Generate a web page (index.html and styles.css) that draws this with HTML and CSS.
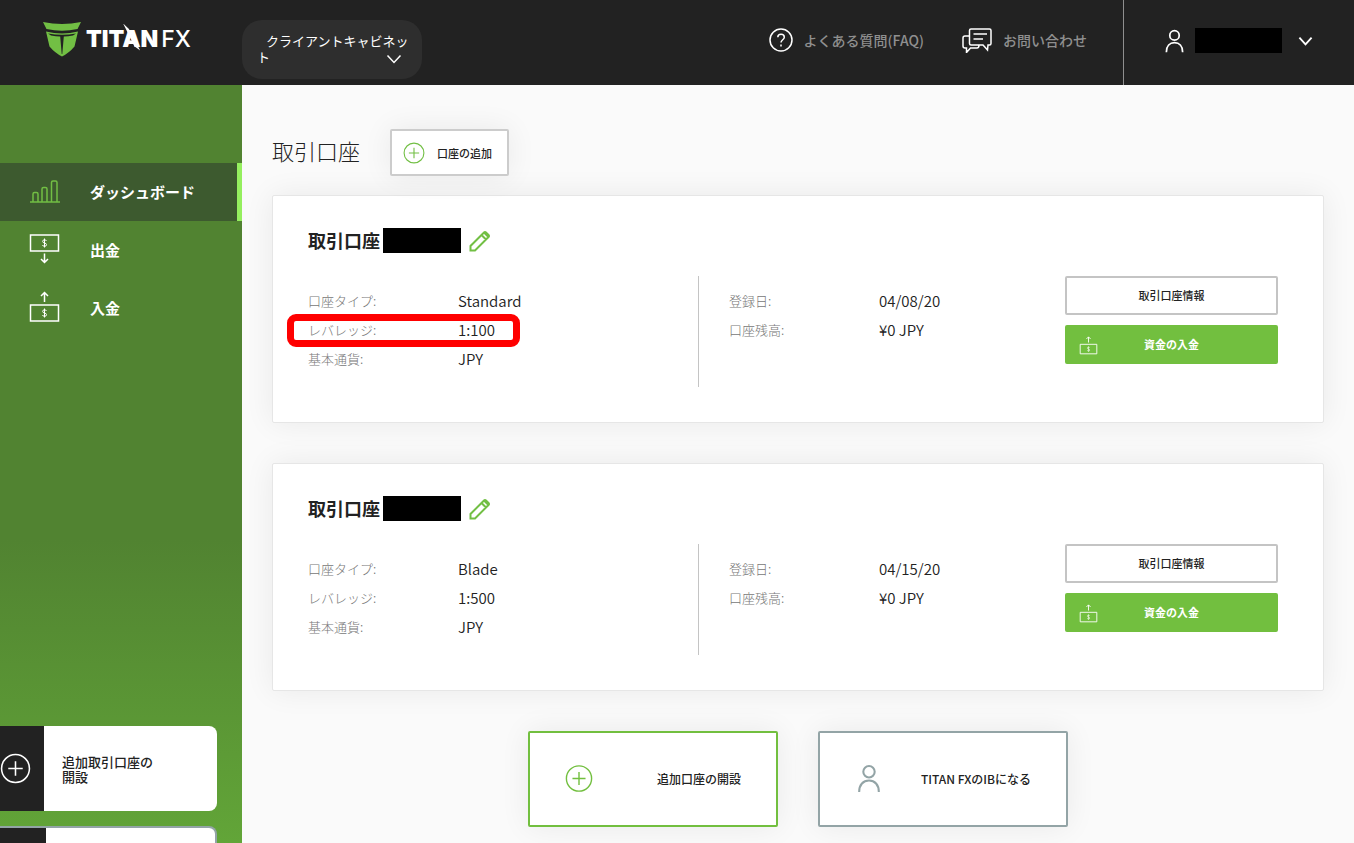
FILE: index.html
```html
<!DOCTYPE html>
<html lang="ja">
<head>
<meta charset="utf-8">
<meta name="viewport" content="width=device-width, initial-scale=1">
<title>Titan FX</title>
<link rel="stylesheet" href="styles.css">
</head>
<body>
<svg class="sprite" aria-hidden="true">
  <symbol id="plus" viewBox="0 0 30 30"><circle cx="15" cy="15" r="13.5"/><path d="M15 8v14M8 15h14"/></symbol>
  <symbol id="user" viewBox="0 0 24 28"><circle cx="12" cy="7.5" r="5.500"/><path d="M2.500 27c0-7 4-11 9.500-11s9.500 4 9.500 11"/></symbol>
  <symbol id="chevron" viewBox="0 0 16 10"><path d="M1.500 1.500 8 8.500l6.500-7"/></symbol>
  <symbol id="pencil" viewBox="0 0 22 22"><path d="M1.500 20.500v-4.500L15 2.500q1-1 2 0l2.500 2.500q1 1 0 2L6 20.500zM12.500 5l4.500 4.500M15 2.500l4.500 4.500"/></symbol>
  <symbol id="deposit" viewBox="0 0 30 32"><path d="M1 14h28v16H1zM15 11V1.500M11.500 5 15 1.500 18.500 5"/><path class="thin" d="M17 20q-.5-1.200-2-1.200-1.800 0-1.800 1.600 0 1.300 1.800 1.600 2 .3 2 1.700 0 1.600-2 1.600-1.600 0-2-1.300M15 17.500v9"/></symbol>
  <symbol id="withdraw" viewBox="0 0 30 32"><path d="M1 2h28v16H1zM15 20.500V29M11.500 26l3.500 3.500 3.500-3.500"/><path class="thin" d="M17 8q-.5-1.200-2-1.200-1.800 0-1.800 1.600 0 1.300 1.800 1.600 2 .3 2 1.700 0 1.600-2 1.600-1.600 0-2-1.300M15 5.500v9"/></symbol>
</svg>

<header class="topbar">
  <a class="logo" href="#" aria-label="TITANFX">
    <svg class="logo-mark" viewBox="0 0 38 36"><path d="M0 1Q19 5 38 1L34.500 8Q19 11.500 3.500 8zM3 10.500Q19 14.500 35 10.500L31.500 25.500Q26 32 19 35.500 12 32 6.500 25.500z"/><path class="logo-slit" d="M5 12.500Q19 15 33 12.500L30 14.500Q25 15.500 20.800 15.500L19.300 33h-.6L17.200 15.500Q13 15.500 8 14.500z"/></svg>
    <span class="logo-text"><b>TIT<span class="logo-a">A</span>N</b>FX</span>
  </a>
  <button class="cabinet" type="button" aria-haspopup="listbox">クライアントキャビネット<svg class="cabinet-arrow"><use href="#chevron"/></svg></button>
  <nav class="help">
    <a href="#"><svg class="help-faq" viewBox="0 0 24 24"><circle cx="12" cy="12" r="11"/><path d="M8.800 9.200c0-4 6.500-4 6.500 0 0 2.500-3.300 2.600-3.300 5.300M12 16.500v2"/></svg>よくある質問(FAQ)</a>
    <a href="#"><svg class="help-chat" viewBox="0 0 30 26"><path d="M9 2h18.500q1.500 0 1.500 1.500v13q0 1.500-1.500 1.500H26l-.5 5-4.500-5H9q-1.500 0-1.500-1.500v-13Q7.500 2 9 2zM11.500 7H25M11.500 12H21M7.500 9H3q-2 0-2 2v8q0 2 2 2h1.500v4.500L8.500 21H15q2 0 2-3"/></svg>お問い合わせ</a>
  </nav>
  <button class="account" type="button" aria-label="アカウント">
    <svg class="account-user"><use href="#user"/></svg>
    <span class="account-name"></span>
    <svg class="account-arrow"><use href="#chevron"/></svg>
  </button>
</header>

<div class="layout">
  <aside class="sidebar">
    <nav class="menu">
      <a class="menu-item active" href="#"><svg viewBox="0 0 31 32"><path d="M1 27h30M4 27V19q0-1.500 1.500-1.500h2Q9 17.500 9 19v8M13 27V14q0-1.500 1.500-1.500h2q1.500 0 1.500 1.500v13M22.500 27V7.500Q22.500 6 24 6h2.500Q28 6 28 7.500V27"/></svg>ダッシュボード</a>
      <a class="menu-item" href="#"><svg><use href="#withdraw"/></svg>出金</a>
      <a class="menu-item" href="#"><svg><use href="#deposit"/></svg>入金</a>
    </nav>
    <div class="promos">
      <a class="promo" href="#"><span class="promo-icon"><svg><use href="#plus"/></svg></span><span class="promo-text">追加取引口座の開設</span></a>
      <a class="promo outlined" href="#" aria-label="IB"><span class="promo-icon"></span></a>
    </div>
  </aside>

  <main class="content">
    <div class="heading">
      <h1>取引口座</h1>
      <button class="add" type="button"><svg><use href="#plus"/></svg>口座の追加</button>
    </div>

    <section class="card">
      <h2>取引口座<span class="account-number"></span><button class="edit" type="button" aria-label="編集"><svg><use href="#pencil"/></svg></button></h2>
      <div class="card-body">
        <dl class="facts">
          <div><dt>口座タイプ:</dt><dd>Standard</dd></div>
          <div class="marked"><dt>レバレッジ:</dt><dd>1:100</dd></div>
          <div><dt>基本通貨:</dt><dd>JPY</dd></div>
        </dl>
        <dl class="facts divided">
          <div><dt>登録日:</dt><dd>04/08/20</dd></div>
          <div><dt>口座残高:</dt><dd>¥0 JPY</dd></div>
        </dl>
        <div class="actions">
          <button class="btn" type="button">取引口座情報</button>
          <button class="btn primary" type="button"><svg><use href="#deposit"/></svg>資金の入金</button>
        </div>
      </div>
    </section>

    <section class="card">
      <h2>取引口座<span class="account-number"></span><button class="edit" type="button" aria-label="編集"><svg><use href="#pencil"/></svg></button></h2>
      <div class="card-body">
        <dl class="facts">
          <div><dt>口座タイプ:</dt><dd>Blade</dd></div>
          <div><dt>レバレッジ:</dt><dd>1:500</dd></div>
          <div><dt>基本通貨:</dt><dd>JPY</dd></div>
        </dl>
        <dl class="facts divided">
          <div><dt>登録日:</dt><dd>04/15/20</dd></div>
          <div><dt>口座残高:</dt><dd>¥0 JPY</dd></div>
        </dl>
        <div class="actions">
          <button class="btn" type="button">取引口座情報</button>
          <button class="btn primary" type="button"><svg><use href="#deposit"/></svg>資金の入金</button>
        </div>
      </div>
    </section>

    <div class="cta-row">
      <a class="cta green" href="#"><svg><use href="#plus"/></svg><span>追加口座の開設</span></a>
      <a class="cta" href="#"><svg><use href="#user"/></svg><span>TITAN FXのIBになる</span></a>
    </div>
  </main>
</div>
</body>
</html>
```
FILE: styles.css
```css
*, *::before, *::after { box-sizing: border-box; }
body {
  margin: 0;
  height: 100vh;
  overflow: hidden;
  display: flex;
  flex-direction: column;
  background: #fafafa;
  color: #222;
  font-family: "Noto Sans CJK JP", sans-serif;
  font-size: 13px;
}
a { color: inherit; text-decoration: none; }
button { font: inherit; color: inherit; background: none; border: 0; padding: 0; cursor: pointer; }
h1, h2, dl, dd { margin: 0; }
svg { fill: none; stroke: currentColor; stroke-width: 1.5; flex: none; display: block; }
.thin { stroke-width: 1; }
.sprite { position: absolute; width: 0; height: 0; }

.topbar { flex: none; height: 85px; display: flex; align-items: center; background: #222; color: #fff; }
.logo { width: 242px; padding: 0 0 8px 43px; display: flex; align-items: center; gap: 5px; }
.logo-mark { width: 38px; height: 36px; fill: #72bf44; stroke: none; }
.logo-mark .logo-slit { fill: #222; }
.logo-text { display: flex; gap: 3px; font-family: Inter, sans-serif; font-size: 23px; line-height: 24px; font-weight: 500; }
.logo-text b { font-weight: 900; }
.logo-a { position: relative; }
.logo-a::after { content: ""; position: absolute; left: 1px; top: -1px; width: 17px; height: 27px; background: #fff; clip-path: polygon(0 0, 34% 20%, 100% 100%, 66% 84%); }
.cabinet {
  position: relative;
  width: 180px;
  height: 59px;
  align-self: flex-start;
  margin-top: 20px;
  padding: 0 12px 2px 15px;
  border-radius: 20px;
  background: #2e2e2e;
  text-align: left;
  text-indent: 9px;
  line-height: 16px;
  word-break: break-all;
}
.cabinet-arrow { position: absolute; right: 20px; bottom: 15px; width: 16px; height: 10px; }
.help { margin-left: auto; display: flex; gap: 38px; padding: 0 36px 6px 0; color: #8f8f8f; font-size: 14px; font-weight: 500; }
.help a { display: flex; align-items: center; gap: 11px; }
.help svg { color: #fff; }
.help-faq { width: 24px; height: 24px; }
.help-chat { width: 30px; height: 26px; }
.account { align-self: stretch; display: flex; align-items: center; padding: 0 41px 4px 40px; border-left: 1px solid #8f8f8f; }
.account-user { width: 21px; height: 24px; stroke-width: 2; }
.account-name { width: 87px; height: 25px; margin: 0 16px 0 10px; background: #000; }
.account-arrow { width: 15px; height: 10px; stroke-width: 2; }

.layout { flex: 1; min-height: 0; display: flex; }
.sidebar {
  flex: none;
  width: 242px;
  display: flex;
  flex-direction: column;
  overflow: hidden;
  background: linear-gradient(#518331 0%, #518331 60%, #62a538 100%);
  color: #fff;
}
.menu { padding-top: 78px; }
.menu-item { height: 58px; display: flex; align-items: center; gap: 30px; padding: 0 0 2px 29px; font-size: 15px; font-weight: 700; }
.menu-item svg { width: 31px; height: 32px; }
.menu-item.active { background: #3d5a2f; border-right: 5px solid #95ef5f; }
.menu-item.active svg { color: #72bf44; }
.promos { margin-top: auto; height: 117px; flex: none; display: flex; flex-direction: column; gap: 15px; }
.promo { flex: none; width: 217px; height: 85px; display: flex; align-items: center; background: #fff; border-radius: 0 8px 8px 0; color: #222; overflow: hidden; }
.promo-icon { flex: none; width: 44px; height: 100%; display: flex; align-items: center; background: #222; color: #fff; }
.promo-icon svg { width: 31px; height: 31px; }
.promo-text { width: 128px; padding-left: 18px; padding-right: 16px; font-weight: 500; line-height: 15px; }
.promo.outlined { border: 2px solid #93a4a6; border-left: 0; }
.promo.outlined .promo-icon { width: 46px; }

.content { flex: 1; min-width: 0; padding: 44px 30px 16px; }
.heading { display: flex; align-items: center; gap: 30px; margin-bottom: 19px; }
h1 { padding-bottom: 5px; font-size: 22px; font-weight: 300; line-height: 42px; }
.add { display: flex; align-items: center; gap: 12px; height: 47px; padding: 0 15px 0 11px; border: 2px solid #ccc; border-radius: 2px; background: #fff; font-size: 11px; font-weight: 500; box-shadow: 0 0 30px rgba(0, 0, 0, .07); }
.add svg { width: 22px; height: 22px; color: #72bf44; }
.card { margin-bottom: 40px; padding: 32px 45px 35px 35px; border: 1px solid #e6e6e6; border-radius: 2px; background: #fff; box-shadow: 0 0 30px rgba(0, 0, 0, .07); }
h2 { display: flex; align-items: center; font-size: 18px; line-height: 25px; font-weight: 700; margin-bottom: 23px; }
.account-number { width: 78px; height: 25px; margin: 0 8px 0 3px; background: #000; }
.edit svg { width: 22px; height: 22px; color: #72bf44; stroke-width: 2; }
.card-body { display: grid; grid-template-columns: 390fr 367fr 213fr; min-height: 111px; }
.facts { padding-top: 10px; }
.facts div { position: relative; display: flex; align-items: center; height: 29px; }
.facts dt { width: 150px; color: #777; font-weight: 300; }
.facts dd { font-size: 15px; font-weight: 350; }
.divided { border-left: 1px solid #c4c4c4; padding-left: 30px; }
.marked::after { content: ""; position: absolute; left: -21px; top: -1px; width: 233px; height: 33px; border: 7px solid #f00; border-radius: 9px; }
.actions { display: flex; flex-direction: column; gap: 10px; }
.btn { position: relative; height: 39px; padding-bottom: 2px; border: 2px solid #c4c4c4; border-radius: 2px; background: #fff; font-size: 11px; font-weight: 500; }
.btn.primary { border-color: #72bf3f; background: #72bf3f; color: #fff; font-weight: 700; }
.btn svg { position: absolute; left: 12px; top: 9px; width: 19px; height: 19px; }
.cta-row { display: flex; justify-content: center; gap: 40px; }
.cta { width: 250px; height: 96px; display: flex; align-items: center; justify-content: space-between; padding: 0 35px 2px; border: 2px solid #93a4a6; border-radius: 2px; background: #fff; font-size: 12px; font-weight: 500; box-shadow: 0 0 30px rgba(0, 0, 0, .07); }
.cta svg { width: 28px; height: 29px; color: #93a4a6; stroke-width: 2; }
.cta.green { border-color: #72bf3f; }
.cta.green svg { color: #72bf3f; stroke-width: 1.5; }
```
